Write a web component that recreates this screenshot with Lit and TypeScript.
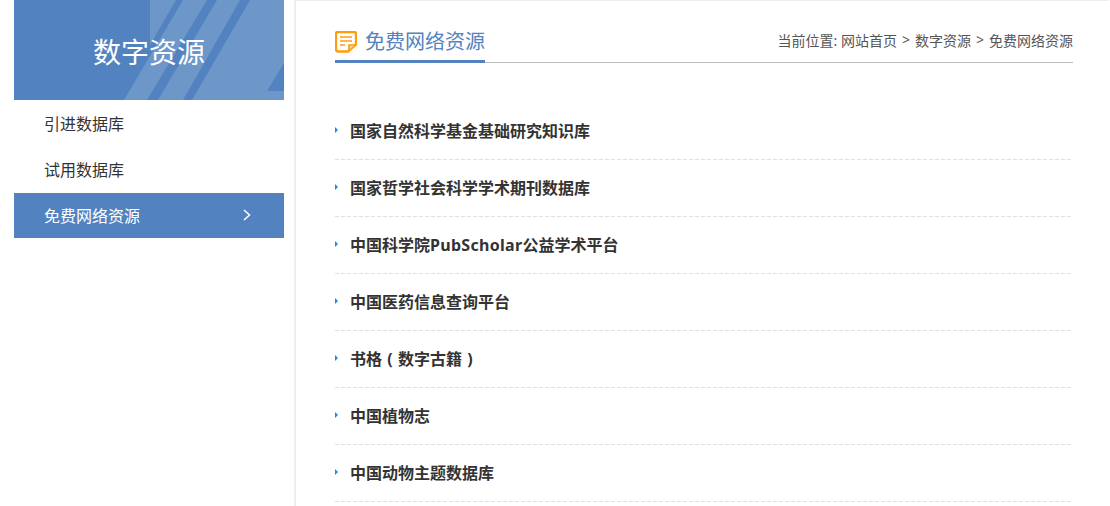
import { LitElement, html, css, svg } from "lit";
import { customElement } from "lit/decorators.js";

const LINKS = [
    html`国家自然科学基金基础研究知识库`,
    html`国家哲学社会科学学术期刊数据库`,
    html`中国科学院<span class="latin">PubScholar</span>公益学术平台`,
    html`中国医药信息查询平台`,
    html`书格<span class="paren">(</span>数字古籍<span class="paren">)</span>`,
    html`中国植物志`,
    html`中国动物主题数据库`,
];

const bannerArt = svg`
    <polygon points="150,0 176,0 150,45" />
    <polygon points="124,100 147,100 207,0 183,0" />
    <polygon points="158,100 183,100 240,0 217,0" />
    <polygon points="192,100 284,100 284,0 250,0" />
    <polygon class="cut" points="267,91 284,91 284,63" />
`;

@customElement("app-root")
export class AppRoot extends LitElement {
    static styles = css`
        :host {
            display: flex;
            height: 506px;
            overflow: hidden;
            padding-left: 14px;
            background: #fff;
            font-family: "Noto Sans", "Noto Sans CJK SC", sans-serif;
            color: #333;
        }
        .side {
            width: 270px;
            flex: none;
        }
        .banner {
            display: grid;
            height: 100px;
            background: #5282c0;
        }
        .banner > * {
            grid-area: 1 / 1;
        }
        .art {
            width: 270px;
            height: 100px;
            fill: #6d97c9;
        }
        .art .cut {
            fill: #5282c0;
        }
        .banner h1 {
            margin: 0;
            padding-top: 31px;
            text-align: center;
            font-size: 28px;
            line-height: 42px;
            font-weight: 400;
            color: #fff;
            z-index: 1;
        }
        .menu {
            padding-top: 1px;
        }
        .menu div {
            display: flex;
            align-items: center;
            justify-content: space-between;
            box-sizing: border-box;
            height: 46px;
            padding: 0 33px 2px 30px;
            font-size: 16px;
        }
        .menu div.on {
            height: 45px;
            background: #5282c0;
            color: #fff;
        }
        .chev {
            width: 8px;
            height: 12px;
            fill: none;
            stroke: #fff;
            stroke-width: 1.5;
        }
        main {
            width: 815px;
            flex: none;
            margin-left: 10px;
            padding: 0 36px 0 39px;
            box-sizing: border-box;
            border-left: 2px solid #eee;
            border-top: 1px solid #eee;
        }
        .head {
            display: flex;
            justify-content: space-between;
            height: 61px;
            border-bottom: 1px solid #bbb;
        }
        .title {
            display: flex;
            align-items: center;
            gap: 8px;
            box-sizing: border-box;
            width: 150px;
            height: 62px;
            padding-top: 26px;
            padding-bottom: 3px;
            border-bottom: 3px solid #5282c0;
            font-size: 20px;
            line-height: 30px;
            color: #5282c0;
            white-space: nowrap;
        }
        .title svg {
            width: 22px;
            height: 22px;
            flex: none;
            margin-bottom: 1px;
        }
        .crumbs {
            display: flex;
            align-items: center;
            height: 77px;
            font-size: 14px;
            color: #555;
            white-space: pre;
        }
        .crumbs i {
            font-style: normal;
            margin: 0 5px;
        }
        ul {
            list-style: none;
            margin: 40px 0 0;
            padding: 0;
        }
        li {
            display: flex;
            align-items: center;
            gap: 12px;
            box-sizing: border-box;
            height: 57px;
            padding-bottom: 4px;
            background: linear-gradient(to right, #e0e0e0 4px, transparent 4px) left bottom / 6px 1px repeat-x;
            font-size: 16px;
            font-weight: 700;
        }
        li::before {
            content: "";
            border-left: 3px solid #1e88e5;
            border-top: 3px solid transparent;
            border-bottom: 3px solid transparent;
        }
        .latin {
            letter-spacing: 0.3px;
        }
        .paren {
            display: inline-block;
            width: 16px;
            text-align: center;
        }
    `;

    render() {
        return html`
            <aside class="side">
                <div class="banner">
                    <svg class="art" viewBox="14 0 270 100">${bannerArt}</svg>
                    <h1>数字资源</h1>
                </div>
                <nav class="menu">
                    <div>引进数据库</div>
                    <div>试用数据库</div>
                    <div class="on">
                        免费网络资源
                        <svg class="chev" viewBox="0 0 8 12"><path d="M1 1l5.5 5L1 11" /></svg>
                    </div>
                </nav>
            </aside>
            <main>
                <header class="head">
                    <div class="title">
                        <svg viewBox="0 0 22 22" fill="none" stroke="#ff9d0b" stroke-width="2.4">
                            <path d="M13 20.5H3a2 2 0 0 1-2-2V3a2 2 0 0 1 2-2h16a2 2 0 0 1 2 2v10.5z" />
                            <path d="M14 19v-5h6" fill="#ffd08a" stroke-width="1.6" />
                            <path d="M5 6h12M5 10h12M5 14h5" stroke-width="1.6" />
                        </svg>
                        免费网络资源
                    </div>
                    <div class="crumbs">当前位置: 网站首页<i>&gt;</i>数字资源<i>&gt;</i>免费网络资源</div>
                </header>
                <ul>
                    ${LINKS.map((t) => html`<li><span>${t}</span></li>`)}
                </ul>
            </main>
        `;
    }
}
